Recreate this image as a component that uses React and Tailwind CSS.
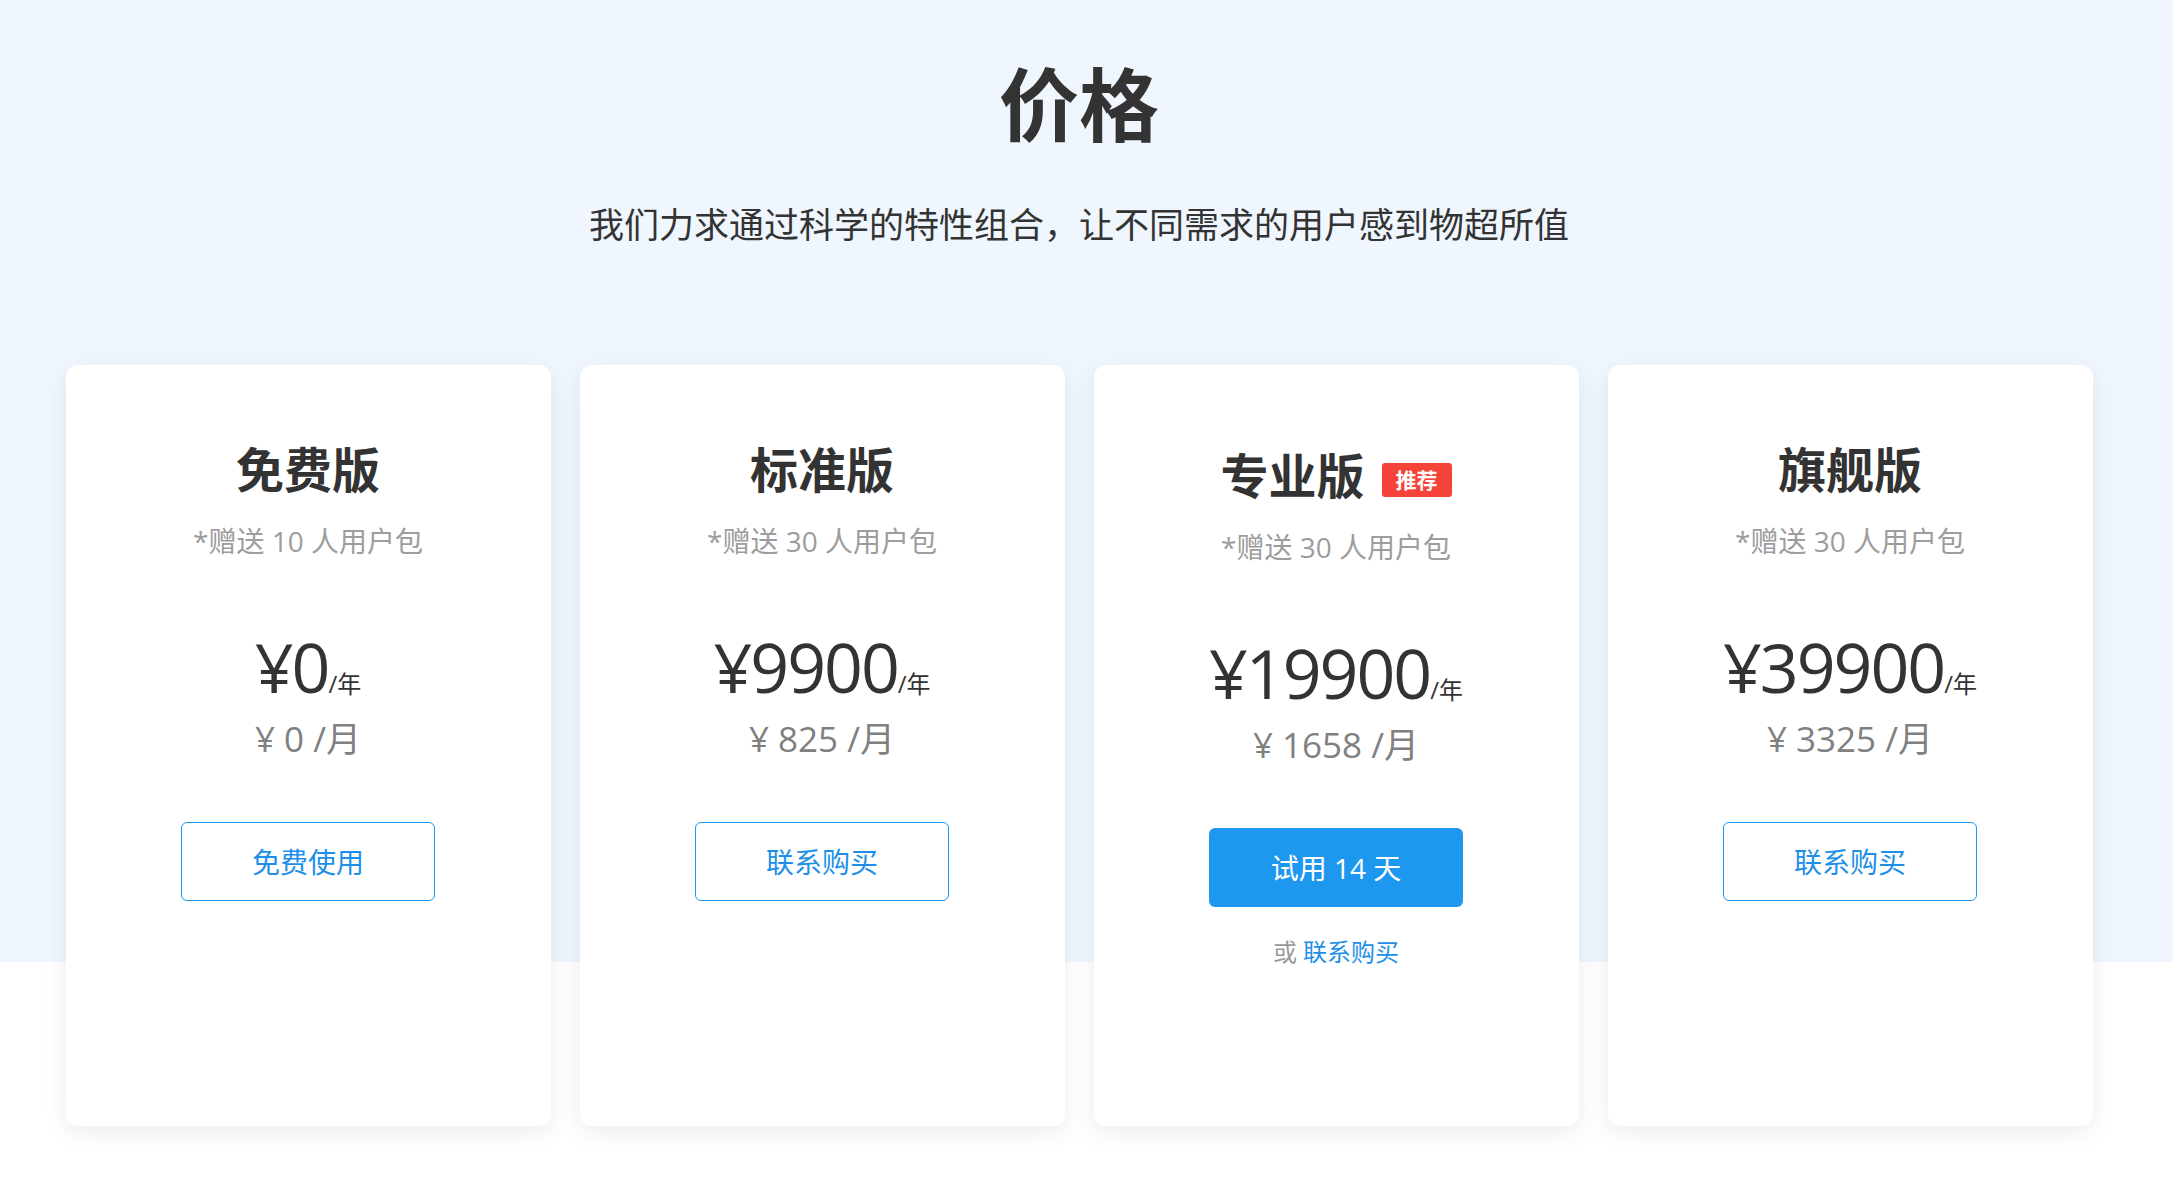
import React from 'react';

const plans = [
  { name: '免费版', users: 10, price: '0', month: '0', action: '免费使用' },
  { name: '标准版', users: 30, price: '9900', month: '825', action: '联系购买' },
  { name: '专业版', users: 30, price: '19900', month: '1658', action: '试用 14 天', featured: true },
  { name: '旗舰版', users: 30, price: '39900', month: '3325', action: '联系购买' },
];

const font = "font-['Open_Sans','Noto_Sans_CJK_SC',sans-serif]";

const PlanCard = ({ plan }) => {
  return (
    <div className="w-[485px] h-[761px] bg-white rounded-[12px] shadow-[0_6px_24px_rgba(0,0,0,0.08)] flex flex-col items-center">
      <div className={`flex flex-col items-center pt-[81px] ${plan.featured ? 'mt-[6px]' : ''}`}>
        {/* Plan title */}
        <div className="flex items-center h-[48px]">
          <h3 className="text-[48px] leading-[48px] font-bold text-[#333]">{plan.name}</h3>
          {plan.featured && (
            <span className="ml-[17px] mt-[8px] w-[70px] h-[34px] rounded-[3px] bg-[#f5433a] text-white text-[21px] leading-[34px] font-bold text-center">
              推荐
            </span>
          )}
        </div>

        <p className="mt-[33px] text-[28px] leading-[28px] text-[#9d9d9d]">*赠送 {plan.users} 人用户包</p>

        {/* Price */}
        <div className="mt-[78px] flex items-baseline text-[#333]">
          <span className="text-[68px] leading-[68px] tracking-[-2px]">¥{plan.price}</span>
          <span className="text-[24px] leading-[24px]">/年</span>
        </div>
        <p className="mt-[20px] text-[35px] leading-[35px] text-[#808080]">¥ {plan.month} /月</p>

        {plan.featured ? (
          <button className="mt-[66px] w-[254px] h-[79px] rounded-[6px] bg-[#1e97ef] text-white text-[28px]">
            {plan.action}
          </button>
        ) : (
          <button className="mt-[66px] w-[254px] h-[79px] rounded-[6px] border border-[#1e97ef] bg-white text-[#1e8fe9] text-[28px]">
            {plan.action}
          </button>
        )}

        {plan.featured && (
          <p className="mt-[33px] text-[24px] leading-[24px]">
            <span className="text-[#999]">或 </span>
            <a className="text-[#1e8fe9]">联系购买</a>
          </p>
        )}
      </div>
    </div>
  );
};

const App = () => {
  return (
    <div
      className={`${font} min-h-[1186px] pr-[15px] bg-[linear-gradient(to_bottom,#eff6fd_962px,#ffffff_962px)]`}
    >
      <div className="flex flex-col items-center pt-[64px]">
        <h1 className="text-[80px] leading-[80px] font-bold text-[#333]">价格</h1>
        <p className="mt-[63px] text-[35px] leading-[35px] text-[#333]">
          我们力求通过科学的特性组合，让不同需求的用户感到物超所值
        </p>

        <div className="mt-[123px] flex gap-[29px]">
          {plans.map((plan) => (
            <PlanCard key={plan.name} plan={plan} />
          ))}
        </div>
      </div>
    </div>
  );
};

export default App;
